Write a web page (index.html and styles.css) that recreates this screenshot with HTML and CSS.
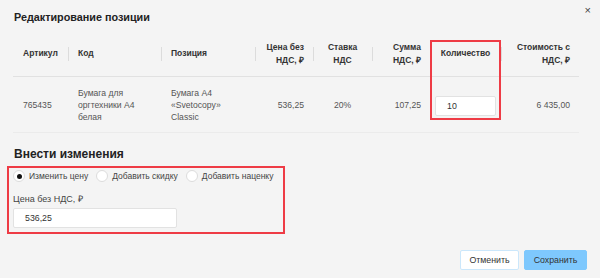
FILE: index.html
```html
<!DOCTYPE html>
<html lang="ru">
<head>
  <meta charset="UTF-8">
  <title>Редактирование позиции</title>
  <link rel="stylesheet" href="styles.css">
</head>
<body>

<!-- Окно редактирования -->
<div class="modal">
  <div class="modal-head">
    <h1 class="title">Редактирование позиции</h1>
    <span class="close">×</span>
  </div>

  <!-- Таблица позиции -->
  <div class="grid">
    <div class="th">Артикул</div>
    <div class="th sep">Код</div>
    <div class="th sep">Позиция</div>
    <div class="th sep right">Цена без<br>НДС, ₽</div>
    <div class="th sep center">Ставка<br>НДС</div>
    <div class="th sep right">Сумма<br>НДС, ₽</div>
    <div class="th sep center qty-head">Количество<span class="mark"></span></div>
    <div class="th sep right">Стоимость с<br>НДС, ₽</div>

    <div class="td">765435</div>
    <div class="td">Бумага для<br>оргтехники А4<br>белая</div>
    <div class="td">Бумага А4<br>«Svetocopy»<br>Classic</div>
    <div class="td right">536,25</div>
    <div class="td center">20%</div>
    <div class="td right">107,25</div>
    <div class="td center"><input class="qty" type="text" value="10"></div>
    <div class="td right">6 435,00</div>
  </div>

  <h2 class="subtitle">Внести изменения</h2>

  <div class="changes">
    <div class="radios">
      <label class="radio"><span class="dot on"></span>Изменить цену</label>
      <label class="radio"><span class="dot"></span>Добавить скидку</label>
      <label class="radio"><span class="dot"></span>Добавить наценку</label>
    </div>
    <div class="field-label">Цена без НДС, ₽</div>
    <input class="price" type="text" value="536,25">
  </div>

  <div class="actions">
    <button class="btn cancel">Отменить</button>
    <button class="btn save">Сохранить</button>
  </div>
</div>

</body>
</html>
```

FILE: styles.css
```css
body {
  margin: 0;
  background: #f4f4f4;
  font-family: "Liberation Sans", Arial, sans-serif;
  color: #333;
}

.modal {
  padding: 6px 13px 0 13px;
}

.modal-head {
  display: flex;
  justify-content: space-between;
  align-items: flex-start;
  height: 25px;
}

.title {
  margin: 2px 0 0 1px;
  font-size: 10.8px;
  line-height: 18px;
  font-weight: bold;
  color: #222;
}

.close {
  font-size: 11px;
  line-height: 8px;
  color: #444;
  margin-right: -4px;
}

/* Таблица */
.grid {
  display: grid;
  grid-template-columns: 55px 93px 94px 58px 59px 58px 71px 78px;
  grid-template-rows: 46px 56px;
}

.th {
  display: flex;
  align-items: center;
  padding: 0 0 0 10px;
  font-size: 8.5px;
  line-height: 13px;
  font-weight: bold;
  color: #333;
  white-space: nowrap;
  border-bottom: 1px solid #e1e1e1;
}

.th.sep {
  background: linear-gradient(#dcdcdc, #dcdcdc) left center / 1px 14px no-repeat;
}

.td {
  display: flex;
  align-items: center;
  padding: 0 0 0 10px;
  font-size: 8.6px;
  line-height: 12px;
  color: #555;
  white-space: nowrap;
  border-bottom: 1px solid #ebebeb;
}

.right {
  justify-content: flex-end;
  text-align: right;
  padding: 0 9px 0 0;
}

.center {
  justify-content: center;
  text-align: center;
  padding: 0;
}

.qty-head {
  position: relative;
}

/* Красная рамка вокруг колонки количества */
.mark {
  position: absolute;
  top: 9px;
  left: 0;
  right: 0;
  height: 80px;
  box-sizing: border-box;
  border: 2px solid #ee3b45;
  pointer-events: none;
}

.qty {
  width: 61px;
  height: 20px;
  box-sizing: border-box;
  border: 1px solid #e2e2e2;
  border-radius: 2px;
  background: #fff;
  padding: 0 11px;
  font: 8.8px "Liberation Sans", Arial, sans-serif;
  color: #333;
  margin-top: 3px;
}

.subtitle {
  margin: 13px 0 0 1px;
  font-size: 12px;
  line-height: 17px;
  font-weight: bold;
  color: #222;
}

.changes {
  width: 265px;
  margin: 3px 0 0 -6px;
  padding: 1px 5px 4px 4px;
  border: 2px solid #ee3b45;
}

.radios {
  display: flex;
  gap: 8px;
  height: 14px;
  align-items: center;
}

.radio {
  display: flex;
  align-items: center;
  gap: 4px;
  font-size: 8.5px;
  color: #444;
  white-space: nowrap;
}

.dot {
  width: 12px;
  height: 12px;
  border-radius: 50%;
  border: 1px solid #dcdcdc;
  background: #fff;
  box-sizing: border-box;
  display: flex;
  align-items: center;
  justify-content: center;
}

.dot.on::after {
  content: "";
  width: 5px;
  height: 5px;
  border-radius: 50%;
  background: #111;
}

.field-label {
  margin-top: 10px;
  font-size: 9px;
  line-height: 12px;
  color: #444;
}

.price {
  display: block;
  margin-top: 3px;
  width: 164px;
  height: 20px;
  box-sizing: border-box;
  border: 1px solid #e2e2e2;
  border-radius: 2px;
  background: #fff;
  padding: 0 11px;
  font: 8.8px "Liberation Sans", Arial, sans-serif;
  color: #333;
}

.actions {
  display: flex;
  justify-content: flex-end;
  gap: 5px;
  margin-top: 16px;
}

.btn {
  height: 20px;
  border-radius: 2px;
  font: 8.8px "Liberation Sans", Arial, sans-serif;
  color: #333;
  cursor: pointer;
}

.btn.cancel {
  width: 59px;
  background: #fff;
  border: 1px solid #cbe7fb;
}

.btn.save {
  width: 63px;
  background: #7ec8fd;
  border: 1px solid #7ec8fd;
}
```
